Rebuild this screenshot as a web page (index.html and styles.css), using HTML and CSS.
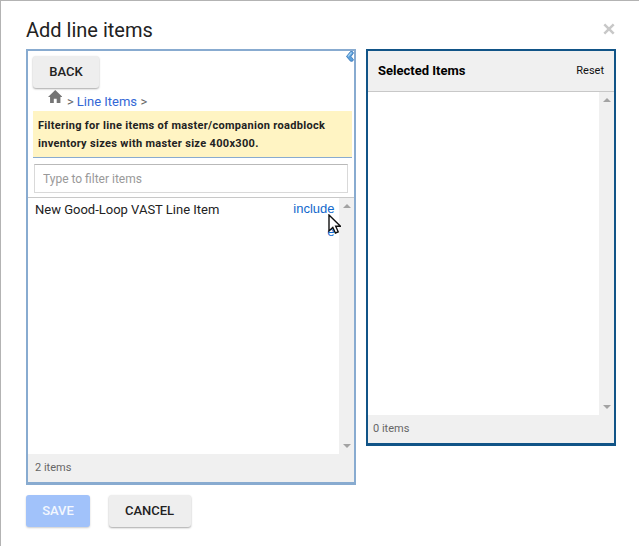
FILE: index.html
```html
<!DOCTYPE html>
<html lang="en">
<head>
<meta charset="utf-8">
<title>Add line items</title>
<link rel="stylesheet" href="styles.css">
</head>
<body>
<main class="dialog">
  <header class="dialog-header">
    <h1>Add line items</h1>
    <svg class="close" viewBox="0 0 12 12" role="img" aria-label="Close"><path d="M1.3 1.3L10.7 10.7M10.7 1.3L1.3 10.7"/></svg>
  </header>
  <div class="panels">
    <section class="panel source">
      <svg class="collapse" viewBox="0 0 8 11"><path d="M4.5 .5H6.5L7.5 2L5 5.5L7.5 8.7L6.5 10.2H4.5L.5 5.5Z"/><path class="shine" d="M5.5 1.5L2 5.4"/></svg>
      <button class="btn back">BACK</button>
      <nav class="crumbs">
        <svg class="home" viewBox="0 0 14 12" preserveAspectRatio="none"><path d="M7 0L0 6.5H2V12H5.6V8H8.4V12H12V6.5H14Z"/></svg>
        <span class="sep">&gt;</span><a>Line Items</a><span class="sep">&gt;</span>
      </nav>
      <p class="notice">Filtering for line items of master/companion roadblock<br>inventory sizes with master size 400x300.</p>
      <input class="filter" type="text" placeholder="Type to filter items">
      <div class="list">
        <div class="rows">
          <span class="name">New Good-Loop VAST Line Item</span>
          <div class="actions"><a>include</a><a>e</a></div>
        </div>
        <div class="scrollbar"><i class="up"></i><i class="down"></i></div>
        <svg class="cursor" viewBox="0 0 13 20"><path d="M1 1V17L4.8 13.5L7.4 19L10.2 17.8L7.7 12.3H12.5Z"/></svg>
      </div>
      <footer class="count">2 items</footer>
    </section>
    <section class="panel selected">
      <div class="panel-header"><h2>Selected Items</h2><a>Reset</a></div>
      <div class="list">
        <div class="rows"></div>
        <div class="scrollbar"><i class="up"></i><i class="down"></i></div>
      </div>
      <footer class="count">0 items</footer>
    </section>
  </div>
  <div class="buttons">
    <button class="btn save">SAVE</button>
    <button class="btn cancel">CANCEL</button>
  </div>
</main>
</body>
</html>
```
FILE: styles.css
```css
* { box-sizing: border-box; }
body { margin: 0; background: #fff; color: #222; font-family: Roboto, sans-serif; }
.dialog { height: 546px; overflow: hidden; border-top: 1px solid #b3b3b3; border-left: 1px solid #b3b3b3; padding-left: 25px; }
.dialog-header { height: 48px; display: flex; justify-content: space-between; padding: 17px 24px 0 0; }
h1 { margin: 0; font-size: 20px; font-weight: 400; line-height: 24px; }
.close { width: 12px; height: 12px; margin-top: 5px; stroke: #c8c8c8; stroke-width: 2.5; }
.panels { display: flex; align-items: flex-start; gap: 10px; height: 446px; }
.panel { display: flex; flex-direction: column; border: 2px solid #88abd0; border-bottom-width: 3px; }
.source { position: relative; width: 330px; height: 436px; }
.selected { width: 250px; height: 397px; border-color: #115487; }
.collapse { position: absolute; top: 0; right: .5px; width: 8px; height: 11px; fill: #5ba0dc; stroke: #3574b5; stroke-width: .8; }
.collapse .shine { fill: none; stroke: #a9d5f5; stroke-width: 1.2; }
.btn { height: 32px; padding: 0; border: 0; border-radius: 3px; background: #eee; color: #222; font: 500 13px/32px Roboto, sans-serif; box-shadow: 0 1px 2px rgba(0,0,0,.35); }
.back { width: 66px; flex: none; margin: 5px 0 0 5px; }
.crumbs { display: flex; flex: none; height: 23px; padding-left: 19.5px; font-size: 13px; line-height: 15px; }
.home { width: 14.5px; height: 13px; margin-top: 2px; fill: #757575; }
.crumbs .sep, .crumbs a { margin-top: 6px; }
.sep { color: #666; margin-left: 5px; }
.crumbs a { color: #3367d6; margin-left: 3px; }
.crumbs a + .sep { margin-left: 3.5px; }
.notice { flex: none; height: 47px; width: 319px; margin: 0 0 0 5px; padding: 6px 5px 5px; border-bottom: 1px solid #88abd0; background: #fff4c3; font-size: 11px; letter-spacing: .315px; font-weight: 700; line-height: 18px; }
.filter { flex: none; width: 314px; height: 29px; margin: 6px 0 4px 6px; padding: 0 8px; border: 1px solid #d9d9d9; border-top-color: #b9b9b9; background: #fff; font: 12px Roboto, sans-serif; }
.filter::placeholder { color: #999; opacity: 1; }
.list { position: relative; flex: 1; display: flex; border-top: 1px solid #c8c8c8; }
.rows { flex: 1; display: flex; justify-content: space-between; align-items: flex-start; padding: 0 4.5px 0 7px; }
.name { margin-top: 4px; font-size: 13px; line-height: 15px; }
.actions { display: flex; flex-direction: column; align-items: flex-end; gap: 1px; color: #1168cc; font: 13px/22px "Liberation Sans", sans-serif; }
.scrollbar { width: 15px; background: #f0f0f0; display: flex; flex-direction: column; justify-content: space-between; align-items: center; padding: 6px 0; }
.scrollbar i { width: 0; height: 0; border: 4px solid transparent; }
.scrollbar .up { border-top: 0; border-bottom-color: #a3a3a3; }
.scrollbar .down { border-bottom: 0; border-top-color: #a3a3a3; }
.cursor { position: absolute; left: 300px; top: 16px; width: 13px; height: 20px; fill: #fff; stroke: #111; stroke-width: 1.4; }
.count { flex: none; height: 28px; padding-left: 7px; background: #f0f0f0; color: #666; font-size: 11px; line-height: 27px; }
.selected .count { padding-left: 5px; }
.panel-header { flex: none; height: 40px; display: flex; align-items: center; justify-content: space-between; padding: 0 10px 2px; background: #f0f0f0; color: #111; font-size: 11px; }
h2 { margin: 0; font-size: 13px; font-weight: 700; color: #000; }
.buttons { display: flex; gap: 18.5px; }
.save { width: 64px; background: #a1c2fa; color: #f3f7fe; box-shadow: 0 1px 2px rgba(0,0,0,.2); }
.cancel { width: 82px; }
```
